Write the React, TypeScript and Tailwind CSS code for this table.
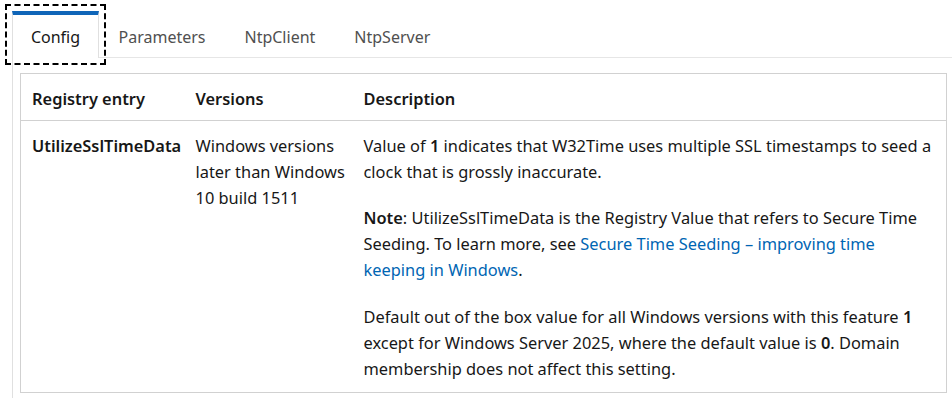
const tabs = ["Config", "Parameters", "NtpClient", "NtpServer"];
const FONT = '"Noto Sans", "Open Sans", sans-serif';

export default function App() {
  const active = 0;
  return (
    <div className="min-h-[398px] bg-white text-[16.4px] leading-[26px] text-[#171717]" style={{ fontFamily: FONT }}>
      <div className="flex pl-[12px] pt-[11px] text-[16px]">
        {tabs.map((t, i) =>
          i === active ? (
            <div
              key={t}
              className="h-[47px] w-[87px] border-x border-t-4 border-x-[#e0e0e0] border-t-[#0f65b8] pt-[9px] text-center text-[#171717] outline-2 outline-offset-[5px] outline-black outline-dashed"
            >
              {t}
            </div>
          ) : (
            <div key={t} className="h-[47px] border-b border-[#e6e6e6] px-[19.5px] pt-[13px] text-[#505050]">
              {t}
            </div>
          )
        )}
        <div className="flex-1 border-b border-[#e6e6e6]" />
      </div>
      <div className="ml-[12px] border-l border-[#e0e0e0] pb-[6px] pl-[7px] pr-[5px] pt-[15px]">
        <table className="w-full table-fixed border-collapse border border-[#d1d1d1] text-left">
          <colgroup>
            <col className="w-[164px]" />
            <col className="w-[168px]" />
            <col />
          </colgroup>
          <thead>
            <tr className="border-b border-[#d1d1d1]">
              <th className="px-[11px] pb-[8px] pt-[12px] font-semibold">Registry entry</th>
              <th className="px-[11px] pb-[8px] pt-[12px] font-semibold">Versions</th>
              <th className="px-[11px] pb-[8px] pt-[12px] font-semibold">Description</th>
            </tr>
          </thead>
          <tbody>
            <tr className="align-top">
              <td className="px-[11px] pb-[10px] pt-[12px] font-semibold whitespace-nowrap">UtilizeSslTimeData</td>
              <td className="px-[11px] pb-[10px] pt-[12px] whitespace-nowrap">
                Windows versions
                <br />
                later than Windows
                <br />
                10 build 1511
              </td>
              <td className="px-[11px] pb-[10px] pt-[12px] whitespace-nowrap">
                <p>
                  Value of <b className="font-semibold">1</b> indicates that W32Time uses multiple SSL timestamps to seed a
                  <br />
                  clock that is grossly inaccurate.
                </p>
                <p className="mt-[20px]">
                  <b className="font-semibold">Note</b>: UtilizeSslTimeData is the Registry Value that refers to Secure Time
                  <br />
                  Seeding. To learn more, see{" "}
                  <a href="#" className="text-[#0065b3]">
                    Secure Time Seeding – improving time
                    <br />
                    keeping in Windows
                  </a>
                  .
                </p>
                <p className="mt-[21px]">
                  Default out of the box value for all Windows versions with this feature <b className="font-semibold">1</b>
                  <br />
                  except for Windows Server 2025, where the default value is <b className="font-semibold">0</b>. Domain
                  <br />
                  membership does not affect this setting.
                </p>
              </td>
            </tr>
          </tbody>
        </table>
      </div>
    </div>
  );
}
